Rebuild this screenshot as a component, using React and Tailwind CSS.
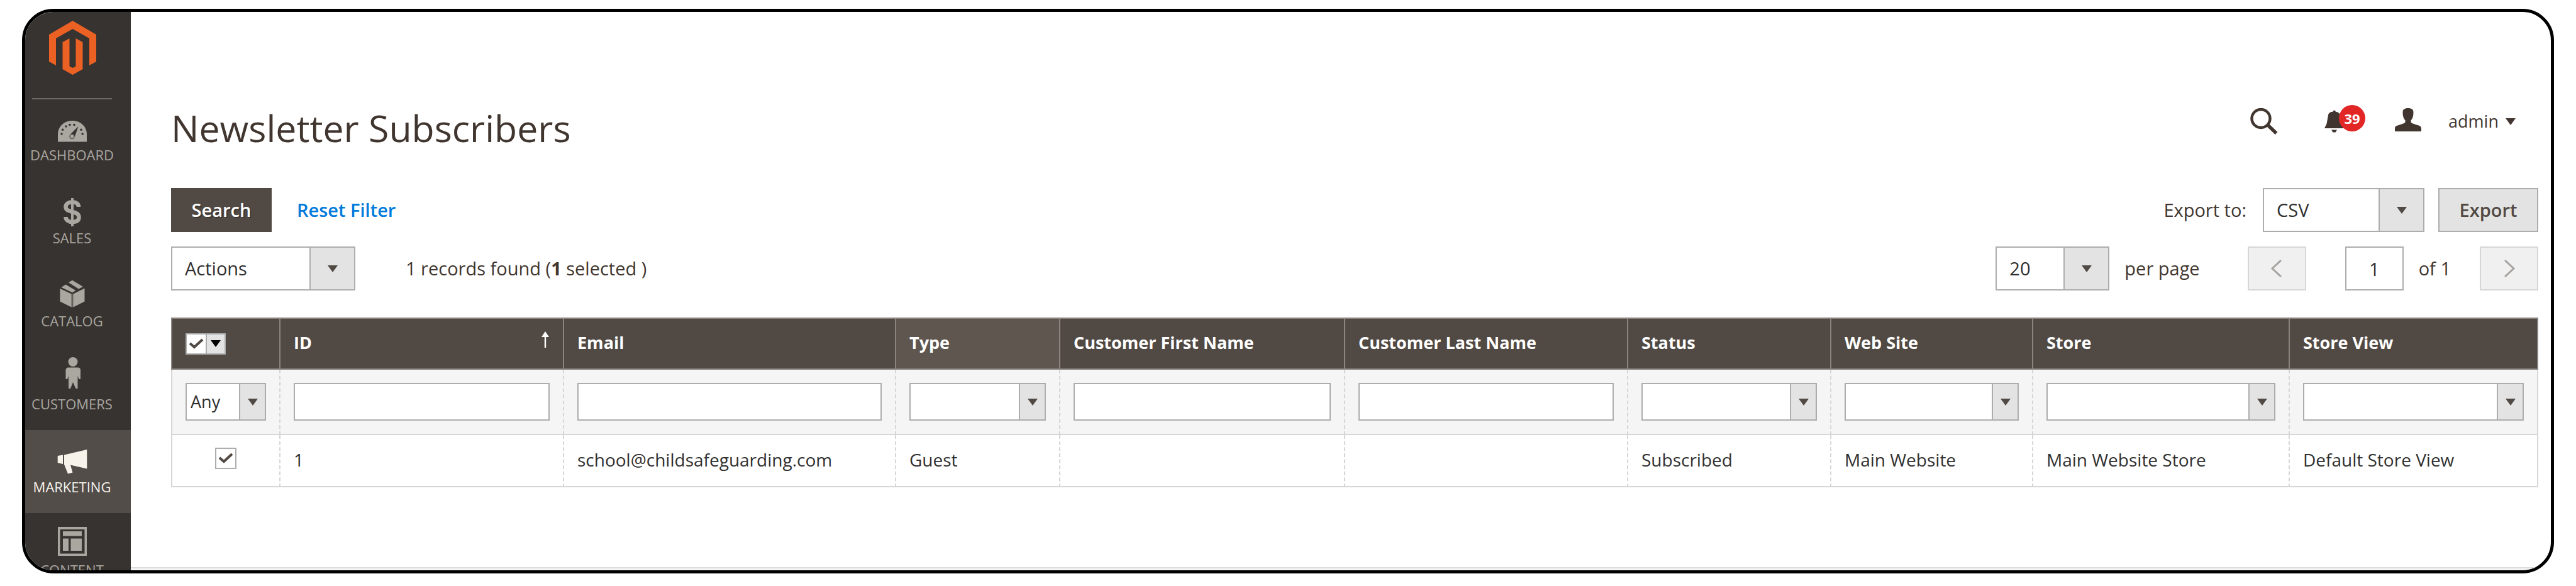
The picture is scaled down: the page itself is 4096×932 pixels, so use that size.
import clsx from 'clsx';

const navItems = [
  { label: 'DASHBOARD', icon: DashboardIcon },
  { label: 'SALES', icon: SalesIcon },
  { label: 'CATALOG', icon: CatalogIcon },
  { label: 'CUSTOMERS', icon: CustomersIcon },
  { label: 'MARKETING', icon: MarketingIcon, active: true },
  { label: 'CONTENT', icon: ContentIcon },
];

const columns = [
  { label: 'ID', filter: 'text', value: '1', width: 'w-[451px]', sorted: true },
  { label: 'Email', filter: 'text', value: 'school@childsafeguarding.com', width: 'w-[528px]' },
  { label: 'Type', filter: 'select', value: 'Guest', width: 'w-[261px]', hovered: true },
  { label: 'Customer First Name', filter: 'text', value: '', width: 'w-[453px]' },
  { label: 'Customer Last Name', filter: 'text', value: '', width: 'w-[450px]' },
  { label: 'Status', filter: 'select', value: 'Subscribed', width: 'w-[323px]' },
  { label: 'Web Site', filter: 'select', value: 'Main Website', width: 'w-[321px]' },
  { label: 'Store', filter: 'select', value: 'Main Website Store', width: 'w-[408px]' },
  { label: 'Store View', filter: 'select', value: 'Default Store View', width: 'w-[397px]' },
];

export default function App() {
  return (
    <div className="flex h-screen bg-white pt-[14px] pr-[35px] pb-[20px] pl-[35px] font-['Open_Sans',sans-serif] text-[29px] leading-[40px] text-[#41362f]">
      <div className="flex min-w-0 flex-1 overflow-hidden rounded-[50px] border-[5px] border-black">
        <Sidebar />
        <div className="flex min-w-0 flex-1 flex-col">
          <main className="flex-1 pr-[20px] pl-[64px]">
            <Header />
            <Toolbar />
            <SubscribersTable />
          </main>
          <footer className="h-[5px] shrink-0 border-t-2 border-[#dcdcdc] bg-[#f5f5f5]" />
        </div>
      </div>
    </div>
  );
}

function Sidebar() {
  return (
    <aside className="w-[168px] shrink-0 bg-[#373330]">
      <a href="#" aria-label="Magento" className="flex h-[137px] items-start justify-center pt-[14px] pr-[18px]">
        <svg viewBox="0 0 75 86" className="h-[86px] w-[75px]" fill="#eb6123">
          <path d="M37.500 0 75 22V65L64 71V28L37.500 13 11 28V71L0 65V22Z" />
          <path d="M32.500 28V72.500L37.500 75 42.500 72.500V28L53.500 34V77L37.500 86 21.500 77V34Z" />
        </svg>
      </a>
      <hr className="mr-[30px] -mb-[2px] ml-[11px] border-t-2 border-[#736963]" />
      <nav className="flex flex-col">
        {navItems.map(({ label, icon: Icon, active }) => (
          <a
            key={label}
            href="#"
            className={clsx(
              'flex h-[132px] flex-col items-center pt-[16px] pr-[19px] text-[22px] leading-[28px]',
              active ? 'bg-[#524d49] text-[#f7f3eb]' : 'text-[#aaa6a0]',
            )}
          >
            <Icon />
            <span className="mt-[4px]">{label}</span>
          </a>
        ))}
      </nav>
    </aside>
  );
}

function Header() {
  return (
    <header className="flex justify-between pt-[144px] pr-[36px]">
      <h1 className="text-[59px] leading-[80px]">Newsletter Subscribers</h1>
      <div className="flex h-[60px] items-center">
        <button aria-label="Search" className="mr-[74px]">
          <svg viewBox="0 0 45 42" className="h-[42px] w-[45px]" fill="none" stroke="currentColor">
            <circle cx="18" cy="16.5" r="14.5" strokeWidth="4.500" />
            <path d="M28 26 42.500 40" strokeWidth="5.500" />
          </svg>
        </button>
        <button aria-label="Notifications" className="relative mr-[47px] h-[42px] w-[65px]">
          <svg viewBox="0 0 31 36" className="h-[36px] w-[31px]" fill="currentColor">
            <path d="M15.500 0 18.500 3C22 3 24 5 24.500 8L27 22 31 29H0L3.500 22 6 8C6.500 5 9 3 12.500 3Z" />
            <path d="M11 31.500H20L17.500 35.500H13.500Z" />
          </svg>
          <span className="absolute top-[-5px] right-0 flex size-[42px] items-center justify-center rounded-full bg-[#e22626] text-[22px] font-bold text-white">
            39
          </span>
        </button>
        <button className="flex items-center text-[27px]">
          <svg viewBox="0 0 42 37" className="mr-[43px] mb-[5px] h-[37px] w-[42px]" fill="currentColor">
            <path d="M21 0C27 0 29.500 2 29.500 7C29.500 13 28 17 25.500 19.500V22C26 24 30 25 36 27 40 28 42 29.500 42 32V37H0V32C0 29.500 2 28 6 27 12 25 16 24 16.500 22V19.500C14 17 12.500 13 12.500 7 12.500 2 15 0 21 0Z" />
          </svg>
          admin
          <Triangle className="ml-[11px]" />
        </button>
      </div>
    </header>
  );
}

function Toolbar() {
  return (
    <>
      <div className="mt-[56px] flex h-[70px] items-stretch justify-between">
        <div className="flex">
          <button className="w-[160px] bg-[#514943] font-semibold text-white [text-shadow:2px_2px_0_#3d3732]">Search</button>
          <button className="px-[40px] font-semibold text-[#007bdb]">Reset Filter</button>
        </div>
        <div className="flex items-center">
          <label htmlFor="export-format" className="mr-[26px]">Export to:</label>
          <Select id="export-format" value="CSV" className="mr-[22px] h-[70px] w-[257px]" />
          <button className="h-[70px] w-[159px] border-2 border-[#adadad] bg-[#e3e3e3] font-semibold text-[#514943]">Export</button>
        </div>
      </div>
      <div className="mt-[23px] flex h-[70px] items-center justify-between">
        <div className="flex items-center">
          <Select value="Actions" label="Actions" className="h-[70px] w-[293px]" />
          <p className="ml-[80px]">
            1 records found (<strong className="font-bold">1</strong> selected )
          </p>
        </div>
        <div className="flex items-center">
          <Select id="page-size" value="20" className="h-[70px] w-[181px]" />
          <label htmlFor="page-size" className="ml-[24px]">per page</label>
          <PageButton label="Previous page" path="M17 1 3 14 17 27" className="ml-[76px]" />
          <input
            aria-label="Page"
            defaultValue="1"
            className="ml-[62px] h-[70px] w-[93px] border-2 border-[#adadad] text-center text-[#303030]"
          />
          <span className="ml-[24px]">of 1</span>
          <PageButton label="Next page" path="M3 1 17 14 3 27" className="ml-[46px]" />
        </div>
      </div>
    </>
  );
}

function SubscribersTable() {
  return (
    <table className="mt-[43px] w-full table-fixed border-separate border-spacing-0 text-[27px] leading-[36px]">
      <colgroup>
        <col className="w-[172px]" />
        {columns.map((column) => (
          <col key={column.label} className={column.width} />
        ))}
      </colgroup>
      <thead>
        <tr className="h-[83px] bg-[#514943] text-left text-white">
          <th className="border-y-2 border-l-2 border-[#8a837f] pl-[21px]">
            <div className="flex h-[34px] w-[64px] border-2 border-[#adadad]">
              <Checkbox label="Select all" className="size-[30px] bg-white" />
              <button aria-label="Selection options" className="flex flex-1 items-center justify-center border-l-2 border-[#adadad] bg-[#e3e3e3] text-black">
                <Triangle />
              </button>
            </div>
          </th>
          {columns.map(({ label, sorted, hovered }) => (
            <th
              key={label}
              className={clsx('border-y-2 border-l-2 border-[#8a837f] px-[21px] pb-[4px] font-bold last:border-r-2', hovered && 'bg-[#5f564f]')}
            >
              <div className="flex items-center justify-between">
                {label}
                {sorted && (
                  <svg viewBox="0 0 14 26" className="mb-[10px] h-[26px] w-[14px]" fill="currentColor">
                    <path d="M7 0 13 9H8.200V26H5.800V9H1Z" />
                  </svg>
                )}
              </div>
            </th>
          ))}
        </tr>
        <tr className="h-[104px] bg-[#f5f5f5]">
          <td className="border-b-2 border-l-2 border-[#d6d6d6] px-[21px]">
            <Select small value="Any" label="Filter by selection" className="h-[60px] w-full" />
          </td>
          {columns.map(({ label, filter }) => (
            <td key={label} className="border-b-2 border-l-2 border-[#d6d6d6] px-[21px] [border-left-style:dashed] last:border-r-2">
              {filter === 'text' ? (
                <input aria-label={label} className="block h-[60px] w-full border-2 border-[#adadad] bg-white px-[8px]" />
              ) : (
                <Select small value="" label={label} className="h-[60px] w-full" />
              )}
            </td>
          ))}
        </tr>
      </thead>
      <tbody>
        <tr className="h-[83px] text-[28px] text-[#303030]">
          <td className="border-b-2 border-l-2 border-[#d6d6d6] pb-[8px]">
            <Checkbox label="Select row 1" className="mx-auto size-[34px] border-2 border-[#adadad]" />
          </td>
          {columns.map(({ label, value }) => (
            <td key={label} className="border-b-2 border-l-2 border-[#d6d6d6] px-[21px] pb-[4px] [border-left-style:dashed] last:border-r-2">
              {value}
            </td>
          ))}
        </tr>
      </tbody>
    </table>
  );
}

function Select({ id, value, label, small, className }) {
  return (
    <span className={clsx('grid border-2 border-[#adadad] bg-white', className)}>
      <select
        id={id}
        aria-label={label}
        className={clsx('col-start-1 row-start-1 w-full appearance-none text-[#303030]', small ? 'pl-[6px]' : 'pl-[20px]')}
      >
        <option>{value}</option>
      </select>
      <span
        className={clsx(
          'pointer-events-none col-start-1 row-start-1 flex items-center justify-center justify-self-end border-l-2 border-[#adadad] bg-[#e3e3e3] text-[#514943]',
          small ? 'w-[41px]' : 'w-[71px]',
        )}
      >
        <Triangle />
      </span>
    </span>
  );
}

function Checkbox({ label, className }) {
  return (
    <label className={clsx('grid place-items-center', className)}>
      <input type="checkbox" aria-label={label} defaultChecked className="peer col-start-1 row-start-1 size-full appearance-none" />
      <svg
        viewBox="0 0 24 18"
        className="pointer-events-none invisible col-start-1 row-start-1 h-[18px] w-[24px] peer-checked:visible"
        fill="none"
        stroke="#514943"
        strokeWidth="4"
      >
        <path d="M2 8 9 14 22 2" />
      </svg>
    </label>
  );
}

function PageButton({ label, path, className }) {
  return (
    <button aria-label={label} className={clsx('flex h-[70px] w-[93px] items-center justify-center border-2 border-[#d6d6d6] bg-[#f0f0f0]', className)}>
      <svg viewBox="0 0 20 28" className="h-[28px] w-[20px]" fill="none" stroke="#a8a4a1" strokeWidth="3">
        <path d={path} />
      </svg>
    </button>
  );
}

function Triangle({ className }) {
  return (
    <svg viewBox="0 0 16 11" className={clsx('h-[11px] w-[16px]', className)} fill="currentColor">
      <path d="M0 0H16L8 11Z" />
    </svg>
  );
}

function NavIcon({ children }) {
  return (
    <svg viewBox="0 0 52 56" className="h-[56px] w-[52px] shrink-0" fill="currentColor">
      {children}
    </svg>
  );
}

function DashboardIcon() {
  return (
    <NavIcon>
      <path d="M3 53.500V42C3 29 13 20 26 20S49 29 49 42V53.500Z" />
      <g fill="#373330">
        <path d="M35.500 29 30 45 23.500 41Z" />
        <circle cx="9" cy="41" r="1.800" />
        <circle cx="10.700" cy="34.300" r="1.800" />
        <circle cx="16" cy="29" r="1.800" />
        <circle cx="22" cy="26.500" r="1.800" />
        <circle cx="29" cy="26.500" r="1.800" />
        <circle cx="40" cy="34.300" r="1.800" />
        <circle cx="42.200" cy="41" r="1.800" />
      </g>
      <circle cx="25.500" cy="45" r="3.500" stroke="#5a5652" strokeWidth="1.500" />
    </NavIcon>
  );
}

function SalesIcon() {
  return (
    <NavIcon>
      <path
        d="M36 25C36 20 32 17.500 26 17.500S15.500 20 15.500 25 20 31.500 26 33 36.500 36 36.500 41.500 32 49 26 49 15.500 46 15.500 41"
        fill="none"
        stroke="currentColor"
        strokeWidth="6.500"
      />
      <path d="M24 11H28V56H24Z" />
    </NavIcon>
  );
}

function CatalogIcon() {
  return (
    <NavIcon>
      <path d="M24 31.500H28V52.500H24Z" opacity=".4" />
      <path d="M6.500 23 24.500 31.500V52.500L6.500 43.500ZM45.500 22.500 27.500 31.500V52.500L45.500 43.500Z" />
      <path d="M8.500 21 15.500 16.500 31.500 26 26 29.300ZM20 13.300 26 9.800 43 20 36 23.500Z" />
    </NavIcon>
  );
}

function CustomersIcon() {
  return (
    <NavIcon>
      <circle cx="27" cy="7.500" r="7.500" />
      <path d="M20 16.500H35Q39 16.500 39 21V35H36.500L34.500 30V50H31.500L27 40 23 50H20V30L18 35H15.500V21Q15.500 16.500 20 16.500Z" />
    </NavIcon>
  );
}

function MarketingIcon() {
  return (
    <NavIcon>
      <path d="M13 23.500 49.300 15V45.500L23 39.500 26.500 51.500 19 53.500 13 38.500Z" />
      <path d="M2.700 25 11 23.500V38L2.700 36Z" />
    </NavIcon>
  );
}

function ContentIcon() {
  return (
    <NavIcon>
      <path d="M3 6H49V52H3ZM6.500 10V48.500H45.500V10Z" fillRule="evenodd" />
      <path d="M11 13H41V20.500H11ZM11 24.500H20V44H11ZM23.500 24.500H41V44H23.500Z" />
    </NavIcon>
  );
}
